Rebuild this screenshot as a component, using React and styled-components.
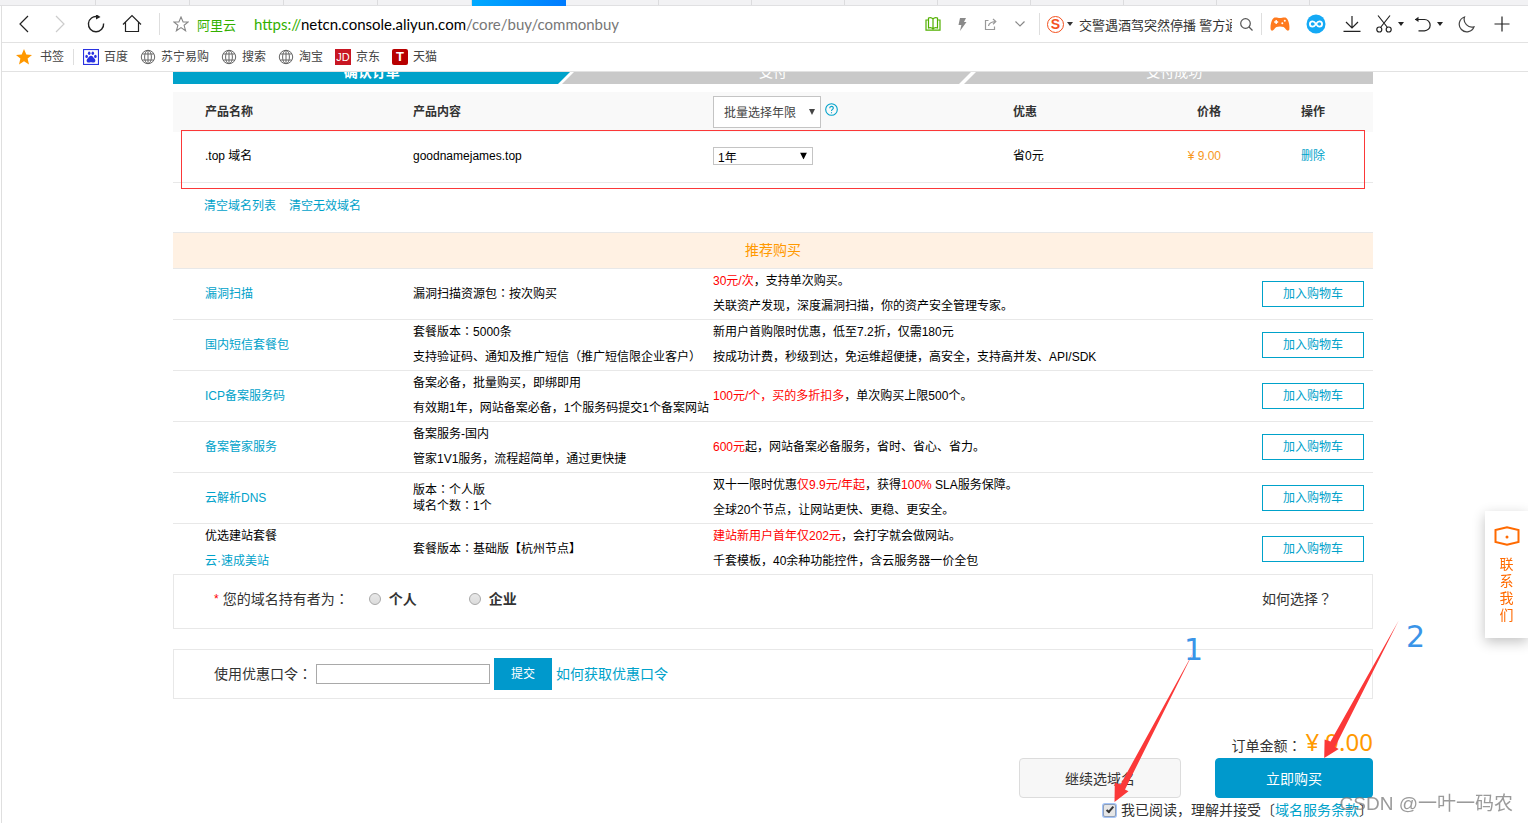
import React from 'react';
import styled, { createGlobalStyle, css } from 'styled-components';

const teal = '#00a2ca';
const line = '#e8e8e8';

const GlobalStyle = createGlobalStyle`
  *,
  *::before,
  *::after {
    box-sizing: border-box;
  }

  body {
    margin: 0;
    background: #fff;
    color: #333;
    font-family: 'Liberation Sans', 'Noto Sans CJK SC', sans-serif;
    font-size: 12px;
    overflow: hidden;
  }

  button,
  input,
  select {
    font: inherit;
    color: inherit;
    margin: 0;
    padding: 0;
  }

  a {
    color: ${teal};
    text-decoration: none;
  }
`;

/* browser chrome */

const TabStrip = styled.div`
  display: flex;
  height: 6px;
  padding-left: 2px;
  background: #f2f2f4;
  border-bottom: 1px solid #e0e0e2;
`;

const Tab = styled.div`
  width: 94px;
  flex-shrink: 0;
  border-right: 1px solid #dcdcde;

  &:nth-child(n + 7) {
    width: 93px;
  }

  ${({ $active }) => $active && css`
    height: 6px;
    border: 0;
    background: linear-gradient(90deg, #00aaff, #007bff);
  `}
`;

const Frame = styled.div`
  margin-left: 1px;
  border-left: 1px solid #dfdfdf;
  background: #fff;
`;

const Toolbar = styled.header`
  display: flex;
  align-items: center;
  height: 37px;
  padding: 0 8px 0 4px;
  border-bottom: 1px solid #e2e2e2;
  font-family: Lato, 'Noto Sans CJK SC', sans-serif;
`;

const ToolButton = styled.button`
  display: flex;
  align-items: center;
  justify-content: center;
  flex-shrink: 0;
  gap: 6px;
  width: ${({ $width }) => $width || 36}px;
  height: 36px;
  border: 0;
  background: none;
  color: ${({ $color }) => $color || '#222'};
`;

const Separator = styled.span`
  flex-shrink: 0;
  width: 1px;
  height: ${({ $height }) => $height || 22}px;
  margin: 0 ${({ $gap }) => $gap || 0}px;
  background: #dedede;
`;

const SiteName = styled.span`
  margin: 0 18px 0 4px;
  color: #33b000;
  font-size: 13px;
  white-space: nowrap;
`;

const Address = styled.div`
  flex: 1;
  min-width: 0;
  overflow: hidden;
  font-size: 15px;
  line-height: 24px;
  white-space: nowrap;
  color: #777;

  i {
    font-style: normal;
    color: #33b000;
  }

  b {
    font-weight: 400;
    color: #000;
  }
`;

const SearchBox = styled.form`
  display: flex;
  align-items: center;
  flex-shrink: 0;
  width: 216px;
  padding: 0 8px 0 2px;

  input {
    flex: 1;
    min-width: 0;
    height: 24px;
    margin: 0 8px 0 6px;
    border: 0;
    outline: 0;
    background: none;
    color: #333;
    font-size: 13px;
  }
`;

const Engine = styled.button`
  display: flex;
  align-items: center;
  gap: 3px;
  border: 0;
  background: none;
  color: #333;

  span {
    display: flex;
    align-items: center;
    justify-content: center;
    width: 17px;
    height: 17px;
    border: 1px solid #f4511e;
    border-radius: 50%;
    color: #f4511e;
    font: 700 14px/14px 'Liberation Sans', sans-serif;
  }
`;

const Bookmarks = styled.nav`
  display: flex;
  align-items: center;
  gap: 9px;
  height: 29px;
  padding-left: 14px;
  border-bottom: 1px solid #e2e2e2;
`;

const BookmarkList = styled.div`
  display: flex;
  gap: 12px;
`;

const Bookmark = styled.a`
  display: flex;
  align-items: center;
  gap: ${({ $gap }) => $gap || 5}px;
  color: #444;
  line-height: 16px;
`;

const LetterIcon = styled.span`
  width: 16px;
  height: 16px;
  background: ${({ $bg }) => $bg};
  border-radius: ${({ $round }) => $round || 0}px;
  color: #fff;
  font: ${({ $weight }) => $weight || 400} ${({ $size }) => $size}px/16px 'Liberation Sans', sans-serif;
  text-align: center;
`;

/* page */

const Viewport = styled.main`
  overflow: hidden;
  padding-left: 16px;
`;

const Page = styled.div`
  position: relative;
  max-width: 1200px;
  margin: -14px auto 0;
`;

const Steps = styled.ol`
  display: grid;
  grid-template-columns: repeat(3, 1fr);
  gap: 4px;
  height: 26px;
  margin: 0 0 8px;
  padding: 0;
  overflow: hidden;
  list-style: none;
`;

const Step = styled.li`
  position: relative;
  isolation: isolate;
  color: #fff;
  font-size: 14px;
  line-height: 28px;
  text-align: center;
  font-weight: ${({ $current }) => ($current ? 700 : 400)};

  &::before {
    content: '';
    position: absolute;
    inset: 0;
    z-index: -1;
    background: ${({ $current }) => ($current ? teal : '#c9c9c9')};
    transform: skewX(-45deg);
  }

  &:first-child::before {
    left: -40px;
  }

  &:last-child::before {
    right: -40px;
  }
`;

const Table = styled.table`
  width: 100%;
  border-collapse: separate;
  border-spacing: 0;
  table-layout: fixed;
  color: #000;

  th,
  td {
    padding: 0;
    text-align: left;
    white-space: nowrap;
  }

  th:first-child,
  td:first-child {
    padding-left: 32px;
  }
`;

const OrderTable = styled(Table)`
  thead th {
    height: 40px;
    background: #f9f9f9;
    color: #333;
    line-height: 16px;
  }

  tbody td {
    height: 51px;
    padding-bottom: 2px;
    border-bottom: 1px solid ${line};
    line-height: 16px;
  }

  th:nth-child(5),
  td:nth-child(5) {
    text-align: right;
  }

  th:last-child,
  td:last-child {
    padding-left: 80px;
  }
`;

const Price = styled.td`
  color: #f7981d;
`;

const YearHead = styled.div`
  display: flex;
  align-items: flex-start;
  gap: 4px;

  > svg {
    margin-top: 7px;
  }
`;

const SelectBox = styled.div`
  position: relative;
  width: ${({ $wide }) => ($wide ? 108 : 100)}px;

  select {
    display: block;
    width: 100%;
    height: ${({ $wide }) => ($wide ? 32 : 18)}px;
    padding: 2px 0 0 ${({ $wide }) => ($wide ? 10 : 4)}px;
    appearance: none;
    border: 1px solid #c4c4c4;
    border-radius: 0;
    background: #fff;
    color: ${({ $wide }) => ($wide ? '#444' : '#000')};
    font-weight: 400;
  }

  svg {
    position: absolute;
    top: 50%;
    right: 6px;
    transform: translateY(-50%);
    color: ${({ $wide }) => ($wide ? '#444' : '#000')};
    pointer-events: none;
  }
`;

const ClearLinks = styled.div`
  display: flex;
  gap: 13px;
  height: 49px;
  padding: 14px 0 0 31px;
  line-height: 18px;
`;

const Banner = styled.h2`
  margin: 0;
  border: solid ${line};
  border-width: 1px 0;
  background: #fff1e3;
  color: #ff9900;
  font-size: 14px;
  font-weight: 400;
  line-height: 35px;
  text-align: center;
`;

const OfferTable = styled(Table)`
  td {
    height: 51px;
    border-bottom: 1px solid ${line};
    line-height: 25px;
  }

  tr:last-child td {
    height: 50px;
    border-bottom: 0;
  }

  td:last-child {
    padding-right: 9px;
    text-align: right;
  }
`;

const Tight = styled.div`
  line-height: 16px;
`;

const Hot = styled.span`
  color: #f00;
`;

const CartButton = styled.button`
  width: 102px;
  height: 26px;
  border: 1px solid ${teal};
  background: #fff;
  color: ${teal};
  vertical-align: middle;
`;

const Panel = styled.section`
  display: flex;
  align-items: center;
  height: ${({ $height }) => $height}px;
  margin-bottom: 20px;
  padding: 0 40px;
  border: 1px solid ${line};
  font-size: 14px;
  line-height: 20px;
`;

const OwnerPanel = styled(Panel)`
  padding-bottom: 5px;
`;

const Required = styled.span`
  margin-right: 4px;
  color: #f00;
  font-size: 12px;
`;

const OwnerLabel = styled.span`
  width: 146px;
`;

const RadioLabel = styled.label`
  display: flex;
  align-items: center;
  gap: 8px;
  width: 100px;
  font-weight: 700;

  input {
    appearance: none;
    width: 12px;
    height: 12px;
    border: 1px solid #a8a8a8;
    border-radius: 50%;
    background: linear-gradient(#e8e8e8, #dcdcdc);
  }
`;

const HowTo = styled.span`
  margin-left: auto;
`;

const CodePanel = styled(Panel)`
  gap: 4px;
  margin-bottom: 0;

  input {
    width: 174px;
    height: 20px;
    padding: 0 4px;
    border: 1px solid #a9a9a9;
  }
`;

const SubmitButton = styled.button`
  width: 58px;
  height: 32px;
  border: 0;
  background: #0099cc;
  color: #fff;
  font-size: 12px;
`;

const Total = styled.div`
  display: flex;
  align-items: baseline;
  justify-content: flex-end;
  gap: 4px;
  height: 59px;
  padding-top: 27px;
  font-size: 14px;
  line-height: 31px;

  strong {
    color: #ff9900;
    font-family: 'Noto Sans', sans-serif;
    font-size: 24px;
    font-weight: 400;
  }
`;

const Actions = styled.div`
  display: flex;
  justify-content: flex-end;
  gap: 34px;
`;

const ActionButton = styled.button`
  width: ${({ $primary }) => ($primary ? 158 : 162)}px;
  height: 40px;
  border: 1px solid ${({ $primary }) => ($primary ? '#0099cc' : '#dcdcdc')};
  border-radius: 4px;
  background: ${({ $primary }) => ($primary ? '#0099cc' : '#f7f7f7')};
  color: ${({ $primary }) => ($primary ? '#fff' : '#333')};
  font-size: 14px;
`;

const Agreement = styled.label`
  display: flex;
  align-items: center;
  justify-content: flex-end;
  font-size: 14px;
  line-height: 25px;

  input {
    position: relative;
    appearance: none;
    width: 13px;
    height: 13px;
    margin-right: 5px;
    border: 1px solid #8f9fb8;
    border-radius: 2px;
    background: #e6e6e6;
    box-shadow: 0 0 0 1px #a3c3f7;
  }

  input:checked::after {
    content: '';
    position: absolute;
    top: 0;
    left: 4px;
    width: 4px;
    height: 8px;
    border: solid #333;
    border-width: 0 2px 2px 0;
    transform: rotate(40deg);
  }
`;

const Contact = styled.a`
  position: fixed;
  top: 511px;
  right: 0;
  display: flex;
  flex-direction: column;
  align-items: center;
  gap: 10px;
  width: 43px;
  height: 127px;
  padding-top: 15px;
  background: #fff;
  box-shadow: 0 4px 12px rgba(0, 0, 0, 0.24);
  color: #ff6a00;
  font-size: 14px;
  line-height: 17px;

  span {
    width: 14px;
    white-space: normal;
    word-break: break-all;
  }
`;

/* notes drawn over the page */

const Highlight = styled.div`
  position: absolute;
  top: 72px;
  left: 8px;
  right: 8px;
  height: 59px;
  border: 1px solid #fb3838;
  pointer-events: none;
`;

const Arrows = styled.svg`
  position: absolute;
  right: -30px;
  bottom: 20px;
  pointer-events: none;
`;

const NoteNumber = styled.span`
  position: absolute;
  right: ${({ $right }) => $right}px;
  bottom: ${({ $bottom }) => $bottom}px;
  color: #3a94e8;
  font: 30px/30px 'DejaVu Sans', sans-serif;
`;

const Watermark = styled.span`
  position: fixed;
  right: 15px;
  bottom: 5px;
  color: rgba(120, 120, 120, 0.75);
  font: 19px/28px 'Liberation Sans', 'Noto Sans CJK SC', sans-serif;
  pointer-events: none;
`;

/* colons and question marks sit in the middle of their cell */
const Mark = styled.span`
  font-family: 'Noto Sans CJK TC', sans-serif;
  line-height: 1;
`;

const Zh = ({ children }) => React.Children.map(children, (child) => (
  typeof child === 'string'
    ? child.split(/([：？])/).map((part, i) => (i % 2 ? <Mark key={i}>{part}</Mark> : part))
    : child
));

const Icon = ({ w = 18, h = w, children, ...rest }) => (
  <svg
    width={w}
    height={h}
    viewBox={`0 0 ${w} ${h}`}
    fill="none"
    stroke="currentColor"
    strokeWidth="1.2"
    aria-hidden="true"
    {...rest}
  >
    {children}
  </svg>
);

const Caret = ({ w = 6, h = 4 }) => (
  <Icon w={w} h={h} stroke="none" fill="currentColor">
    <path d={`M0 0H${w}L${w / 2} ${h}Z`} />
  </Icon>
);

const Globe = () => (
  <Icon w={16} stroke="#666" strokeWidth="1">
    <circle cx="8" cy="8" r="6.7" />
    <ellipse cx="8" cy="8" rx="3.4" ry="6.7" />
    <path d="M2.2 5H13.8M2.2 11H13.8M8 1.3V14.7" />
  </Icon>
);

const Paw = () => (
  <Icon w={16} stroke="none" fill="#2932e1">
    <rect x="0.5" y="0.5" width="15" height="15" fill="#fff" stroke="#2932e1" />
    <ellipse cx="3.6" cy="7.4" rx="1.3" ry="1.7" />
    <ellipse cx="6.2" cy="4.2" rx="1.3" ry="1.8" />
    <ellipse cx="9.8" cy="4.2" rx="1.3" ry="1.8" />
    <ellipse cx="12.4" cy="7.4" rx="1.3" ry="1.7" />
    <path d="M8 6.8C9.8 6.8 10.2 8.6 11.6 9.8C13 11.2 12.4 13.6 10.4 13.6C9.4 13.6 9 13.2 8 13.2C7 13.2 6.6 13.6 5.6 13.6C3.6 13.6 3 11.2 4.4 9.8C5.8 8.6 6.2 6.8 8 6.8Z" />
  </Icon>
);

const bookmarks = [
  { name: '百度', icon: <Paw /> },
  { name: '苏宁易购', icon: <Globe /> },
  { name: '搜索', icon: <Globe /> },
  { name: '淘宝', icon: <Globe /> },
  { name: '京东', icon: <LetterIcon $bg="#c81623" $size={11}>JD</LetterIcon> },
  { name: '天猫', icon: <LetterIcon $bg="#b80000" $size={13} $round={2} $weight={700}>T</LetterIcon> },
];

const offers = [
  {
    name: <a href="#scan">漏洞扫描</a>,
    content: <Zh>漏洞扫描资源包：按次购买</Zh>,
    desc: <><Hot>30元/次</Hot>，支持单次购买。<br />关联资产发现，深度漏洞扫描，你的资产安全管理专家。</>,
  },
  {
    name: <a href="#sms">国内短信套餐包</a>,
    content: <Zh>套餐版本：5000条<br />支持验证码、通知及推广短信（推广短信限企业客户）</Zh>,
    desc: <>新用户首购限时优惠，低至7.2折，仅需180元<br />按成功计费，秒级到达，免运维超便捷，高安全，支持高并发、API/SDK</>,
  },
  {
    name: <a href="#icp">ICP备案服务码</a>,
    content: <>备案必备，批量购买，即绑即用<br />有效期1年，网站备案必备，1个服务码提交1个备案网站</>,
    desc: <><Hot>100元/个，买的多折扣多</Hot>，单次购买上限500个。</>,
  },
  {
    name: <a href="#beian">备案管家服务</a>,
    content: <>备案服务-国内<br />管家1V1服务，流程超简单，通过更快捷</>,
    desc: <><Hot>600元</Hot>起，网站备案必备服务，省时、省心、省力。</>,
  },
  {
    name: <a href="#dns">云解析DNS</a>,
    content: <Tight><Zh>版本：个人版<br />域名个数：1个</Zh></Tight>,
    desc: <>双十一限时优惠<Hot>仅9.9元/年起</Hot>，获得<Hot>100%</Hot> SLA服务保障。<br />全球20个节点，让网站更快、更稳、更安全。</>,
  },
  {
    name: <>优选建站套餐<br /><a href="#site">云·速成美站</a></>,
    content: <Zh>套餐版本：基础版【杭州节点】</Zh>,
    desc: <><Hot>建站新用户首年仅202元</Hot>，会打字就会做网站。<br />千套模板，40余种功能控件，含云服务器一价全包</>,
  },
];

const BrowserBar = () => (
  <Toolbar>
    <ToolButton aria-label="后退">
      <Icon><path d="M13 1L5 9L13 17" /></Icon>
    </ToolButton>
    <ToolButton aria-label="前进" $color="#ccc">
      <Icon><path d="M5 1L13 9L5 17" /></Icon>
    </ToolButton>
    <ToolButton aria-label="刷新">
      <Icon strokeWidth="1.4">
        <path d="M10.5 1.7A7.6 7.6 0 1 0 16.6 8.5" />
        <path d="M9 -1L13.5 2L9 4.5Z" fill="currentColor" stroke="none" />
      </Icon>
    </ToolButton>
    <ToolButton aria-label="主页">
      <Icon w={20}><path d="M1 10.5L10 1.5L19 10.5M3.5 8.5V17.5H16.5V8.5" /></Icon>
    </ToolButton>
    <Separator $gap={9} />
    <ToolButton aria-label="收藏" $width={24} $color="#888">
      <Icon w={16} strokeWidth="1.1">
        <path d="M8 1L10.1 6H15.2L11.1 9.3L12.6 14.8L8 11.6L3.4 14.8L4.9 9.3L0.8 6H5.9Z" />
      </Icon>
    </ToolButton>
    <SiteName>阿里云</SiteName>
    <Address><i>https://</i><b>netcn.console.aliyun.com</b>/core/buy/commonbuy</Address>
    <ToolButton aria-label="阅读模式" $width={29} $color="#52b000">
      <Icon w={16} strokeWidth="1.2">
        <path d="M8 3C7 1.8 5 1.5 3.5 2V12C5 11.5 7 11.8 8 13C9 11.8 11 11.5 12.5 12V2C11 1.5 9 1.8 8 3ZM8 3V13" />
        <path d="M3.5 4H1V14.2H15V4H12.5" />
      </Icon>
    </ToolButton>
    <ToolButton aria-label="极速模式" $width={29} $color="#8a8a8a">
      <Icon w={10} h={14} stroke="none" fill="currentColor"><path d="M3 1H9L7 5H9.5L3 14L4.4 8H1.5Z" /></Icon>
    </ToolButton>
    <ToolButton aria-label="分享" $width={29} $color="#999">
      <Icon w={13}>
        <path d="M4.5 2.5H1.5V11.5H10.5V8.5" />
        <path d="M4.5 8C5 5 7 3.8 11.5 3.6M9 1L11.8 3.6L9 6.2" />
      </Icon>
    </ToolButton>
    <ToolButton aria-label="更多" $width={29} $color="#888">
      <Icon w={10} h={6}><path d="M0.5 0.5L5 5L9.5 0.5" /></Icon>
    </ToolButton>
    <Separator $gap={5} />
    <SearchBox>
      <Engine type="button"><span>S</span><Caret /></Engine>
      <input aria-label="搜索" defaultValue="交警遇酒驾突然停播 警方通报" />
      <Icon w={13} stroke="#555">
        <circle cx="5.5" cy="5.5" r="4.8" />
        <path d="M9 9L12.5 12.5" />
      </Icon>
    </SearchBox>
    <Separator />
    <ToolButton aria-label="游戏">
      <Icon w={20} h={14} stroke="none">
        <path d="M4.5 0.6C6.5 0 8 1 10 1S13.5 0 15.5 0.6C18.5 1.5 20 9 19.3 12.5C19 14 17 14 16 12.5C14.5 10.2 13 9.6 10 9.6S5.5 10.2 4 12.5C3 14 1 14 0.7 12.5C0 9 1.5 1.5 4.5 0.6Z" fill="#ff7a1e" />
        <path d="M6.2 3V7M4.2 5H8.2" stroke="#fff" strokeWidth="1.4" />
        <circle cx="12.3" cy="6.2" r="1" fill="#fff" />
        <circle cx="14.8" cy="3.8" r="1" fill="#fff" />
      </Icon>
    </ToolButton>
    <ToolButton aria-label="加速">
      <Icon w={20}>
        <circle cx="10" cy="10" r="9.5" fill="#14a9f5" stroke="none" />
        <path d="M10 10C8.8 8.2 8 7.3 6.6 7.3A2.7 2.7 0 0 0 6.6 12.7C8 12.7 8.8 11.8 10 10S12 7.3 13.4 7.3A2.7 2.7 0 0 1 13.4 12.7C12 12.7 11.2 11.8 10 10Z" stroke="#fff" strokeWidth="1.8" />
      </Icon>
    </ToolButton>
    <ToolButton aria-label="下载">
      <Icon h={16}><path d="M9 0V11.5M3 6L9 12L15 6M0.5 15.3H17.5" /></Icon>
    </ToolButton>
    <ToolButton aria-label="截图" $width={39}>
      <Icon w={16} h={18}>
        <circle cx="3.3" cy="14.5" r="2.5" />
        <circle cx="12.7" cy="14.5" r="2.5" />
        <path d="M2 0.5L11.5 12.5M14 0.5L4.5 12.5" />
      </Icon>
      <Caret />
    </ToolButton>
    <ToolButton aria-label="恢复" $width={39}>
      <Icon w={17} h={16}>
        <path d="M1 3.5H10.5A5.6 5.6 0 0 1 10.5 14.8H4.5" />
        <path d="M4.5 0.8L0.8 3.5L4.5 6Z" fill="currentColor" stroke="none" />
      </Icon>
      <Caret />
    </ToolButton>
    <ToolButton aria-label="夜间模式" $color="#444">
      <Icon w={17}><path d="M6.5 1A7.6 7.6 0 1 0 16 10.8A7.8 7.8 0 0 1 6.5 1Z" /></Icon>
    </ToolButton>
    <ToolButton aria-label="添加">
      <Icon w={16}><path d="M8 0.5V15.5M0.5 8H15.5" /></Icon>
    </ToolButton>
  </Toolbar>
);

const BookmarkBar = () => (
  <Bookmarks>
    <Bookmark href="#bookmarks" $gap={8}>
      <Icon w={16} stroke="none" fill="#ff9800">
        <path d="M8 0L10.3 5.5L16 6L11.6 9.6L13 15.5L8 12.3L3 15.5L4.4 9.6L0 6L5.7 5.5Z" />
      </Icon>
      书签
    </Bookmark>
    <Separator $height={16} />
    <BookmarkList>
      {bookmarks.map(({ name, icon }) => (
        <Bookmark key={name} href="#bookmark">{icon}{name}</Bookmark>
      ))}
    </BookmarkList>
  </Bookmarks>
);

const Order = () => (
  <OrderTable>
    <colgroup>
      <col width="240" />
      <col width="300" />
      <col width="300" />
      <col width="108" />
      <col width="100" />
      <col />
    </colgroup>
    <thead>
      <tr>
        <th>产品名称</th>
        <th>产品内容</th>
        <th>
          <YearHead>
            <SelectBox $wide>
              <select aria-label="批量选择年限"><option>批量选择年限</option></select>
              <Caret w={6} h={6} />
            </SelectBox>
            <Icon w={13} stroke={teal} strokeWidth="1.1">
              <circle cx="6.5" cy="6.5" r="5.8" />
              <path d="M4.7 5.3C4.7 2.7 8.3 2.8 8.3 5C8.3 6.4 6.5 6.4 6.5 8M6.5 9.2V10.3" />
            </Icon>
          </YearHead>
        </th>
        <th>优惠</th>
        <th>价格</th>
        <th>操作</th>
      </tr>
    </thead>
    <tbody>
      <tr>
        <td>.top 域名</td>
        <td>goodnamejames.top</td>
        <td>
          <SelectBox>
            <select aria-label="年限"><option>1年</option></select>
            <Caret w={7} h={7} />
          </SelectBox>
        </td>
        <td>省0元</td>
        <Price>¥ 9.00</Price>
        <td><a href="#delete">删除</a></td>
      </tr>
    </tbody>
  </OrderTable>
);

const Offers = () => (
  <OfferTable>
    <colgroup>
      <col width="240" />
      <col width="300" />
      <col />
      <col width="120" />
    </colgroup>
    <tbody>
      {offers.map(({ name, content, desc }, i) => (
        <tr key={i}>
          <td>{name}</td>
          <td>{content}</td>
          <td>{desc}</td>
          <td><CartButton>加入购物车</CartButton></td>
        </tr>
      ))}
    </tbody>
  </OfferTable>
);

const App = () => (
  <>
    <GlobalStyle />
    <TabStrip>
      {Array.from({ length: 14 }, (_, i) => <Tab key={i} $active={i === 5} />)}
    </TabStrip>
    <Frame>
      <BrowserBar />
      <BookmarkBar />
      <Viewport>
        <Page>
          <Steps>
            <Step $current>确认订单</Step>
            <Step>支付</Step>
            <Step>支付成功</Step>
          </Steps>
          <Order />
          <ClearLinks>
            <a href="#clear">清空域名列表</a>
            <a href="#clear-invalid">清空无效域名</a>
          </ClearLinks>
          <Banner>推荐购买</Banner>
          <Offers />
          <OwnerPanel $height={55}>
            <Required>*</Required>
            <OwnerLabel><Zh>您的域名持有者为：</Zh></OwnerLabel>
            <RadioLabel><input type="radio" name="owner" />个人</RadioLabel>
            <RadioLabel><input type="radio" name="owner" />企业</RadioLabel>
            <HowTo><Zh>如何选择？</Zh></HowTo>
          </OwnerPanel>
          <CodePanel $height={50}>
            <label htmlFor="code"><Zh>使用优惠口令：</Zh></label>
            <input id="code" type="text" />
            <SubmitButton>提交</SubmitButton>
            <a href="#code-help">如何获取优惠口令</a>
          </CodePanel>
          <Total>
            <span><Zh>订单金额：</Zh></span>
            <strong>¥ 9.00</strong>
          </Total>
          <Actions>
            <ActionButton>继续选域名</ActionButton>
            <ActionButton $primary>立即购买</ActionButton>
          </Actions>
          <Agreement>
            <input type="checkbox" defaultChecked />
            我已阅读，理解并接受〔
            <a href="#terms">域名服务条款</a>
            〕
          </Agreement>

          <Highlight />
          <Arrows width="300" height="190" viewBox="1103 613 300 190" fill="#fb3838">
            <path d="M1193.5 652L1120.5 784.5L1114.8 782.5L1114.5 802L1128.5 791.3L1125 789.5Z" />
            <path d="M1398.7 620.5L1330.5 741.5L1324.6 739.5L1324.2 758L1338.7 749L1335 747Z" />
          </Arrows>
          <NoteNumber $right={170} $bottom={158}>1</NoteNumber>
          <NoteNumber $right={-52} $bottom={171}>2</NoteNumber>
        </Page>
      </Viewport>
    </Frame>
    <Contact href="#contact">
      <Icon w={26} h={20} strokeWidth="2">
        <path d="M1.5 4L13 1.2L24.5 4V16L13 18.8L1.5 16Z" />
        <circle cx="13" cy="11" r="1.5" fill="currentColor" stroke="none" />
      </Icon>
      <span>联系我们</span>
    </Contact>
    <Watermark>CSDN @一叶一码农</Watermark>
  </>
);

export default App;
